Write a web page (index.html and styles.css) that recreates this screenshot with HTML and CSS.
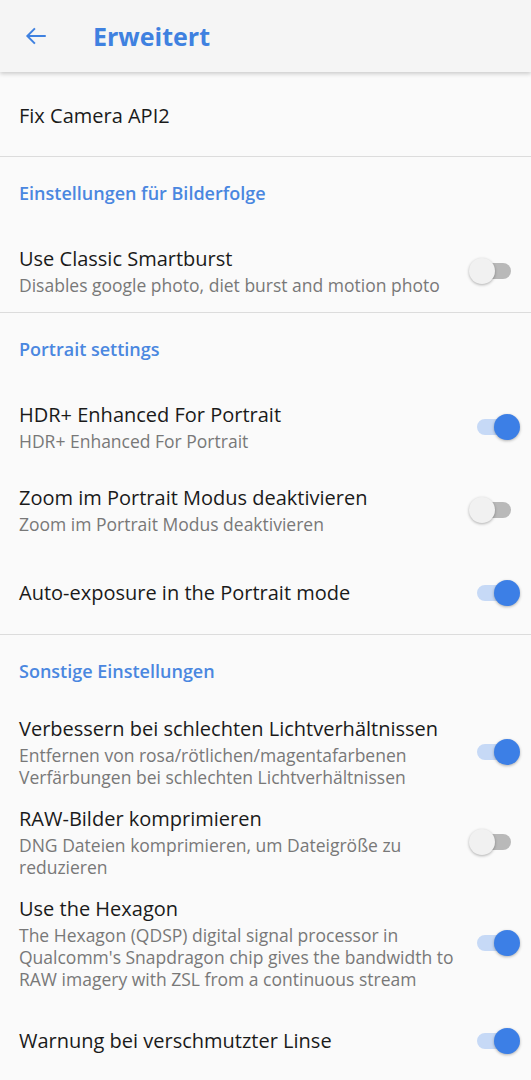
FILE: index.html
```html
<!DOCTYPE html>
<html lang="de">
<head>
    <meta charset="UTF-8">
    <meta name="viewport" content="width=device-width, initial-scale=1.0">
    <title>Erweitert</title>
    <link rel="stylesheet" href="styles.css">
</head>
<body>
    <header class="toolbar">
        <svg class="back" width="26" height="26" viewBox="0 0 24 24">
            <path d="M21 12H4M11 5l-7 7 7 7" fill="none" stroke="#3f81e0" stroke-width="1.8"/>
        </svg>
        <h1>Erweitert</h1>
    </header>

    <div class="pref first">
        <div class="text">
            <div class="title">Fix Camera API2</div>
        </div>
    </div>

    <div class="divider"></div>
    <div class="category">Einstellungen für Bilderfolge</div>
    <div class="pref">
        <div class="text">
            <div class="title">Use Classic Smartburst</div>
            <div class="summary">Disables google photo, diet burst and motion photo</div>
        </div>
        <span class="switch"></span>
    </div>

    <div class="divider"></div>
    <div class="category">Portrait settings</div>
    <div class="pref">
        <div class="text">
            <div class="title">HDR+ Enhanced For Portrait</div>
            <div class="summary">HDR+ Enhanced For Portrait</div>
        </div>
        <span class="switch on"></span>
    </div>
    <div class="pref">
        <div class="text">
            <div class="title">Zoom im Portrait Modus deaktivieren</div>
            <div class="summary">Zoom im Portrait Modus deaktivieren</div>
        </div>
        <span class="switch"></span>
    </div>
    <div class="pref">
        <div class="text">
            <div class="title">Auto-exposure in the Portrait mode</div>
        </div>
        <span class="switch on"></span>
    </div>

    <div class="divider"></div>
    <div class="category">Sonstige Einstellungen</div>
    <div class="pref">
        <div class="text">
            <div class="title">Verbessern bei schlechten Lichtverhältnissen</div>
            <div class="summary">Entfernen von rosa/rötlichen/magentafarbenen Verfärbungen bei schlechten Lichtverhältnissen</div>
        </div>
        <span class="switch on"></span>
    </div>
    <div class="pref">
        <div class="text">
            <div class="title">RAW-Bilder komprimieren</div>
            <div class="summary">DNG Dateien komprimieren, um Dateigröße zu reduzieren</div>
        </div>
        <span class="switch"></span>
    </div>
    <div class="pref">
        <div class="text">
            <div class="title">Use the Hexagon</div>
            <div class="summary">The Hexagon (QDSP) digital signal processor in Qualcomm's Snapdragon chip gives the bandwidth to RAW imagery with ZSL from a continuous stream</div>
        </div>
        <span class="switch on"></span>
    </div>
    <div class="pref">
        <div class="text">
            <div class="title">Warnung bei verschmutzter Linse</div>
        </div>
        <span class="switch on"></span>
    </div>
</body>
</html>
```

FILE: styles.css
```css
body {
    margin: 0;
    background-color: #fafafa;
    font-family: "Open Sans", Roboto, sans-serif;
    color: #1a1a1a;
    overflow: hidden;
}

.toolbar {
    height: 72px;
    display: flex;
    align-items: center;
    background-color: #f5f5f5;
    box-shadow: 0 2px 4px rgba(0, 0, 0, 0.18);
    position: relative;
}

.toolbar .back {
    margin-left: 23px;
}

.toolbar h1 {
    margin: 0 0 0 44px;
    font-size: 25px;
    font-weight: bold;
    color: #3f81e0;
}

.pref {
    min-height: 83px;
    box-sizing: border-box;
    padding: 9px 20px 9px 19px;
    display: flex;
    align-items: center;
}

.pref.first {
    min-height: 84px;
    padding-top: 13px;
}

.pref .text {
    flex: 1;
    padding-right: 14px;
}

.title {
    font-size: 20px;
    line-height: 26px;
}

.summary {
    margin-top: 2px;
    font-size: 17.5px;
    line-height: 22px;
    color: #787878;
}

.divider {
    height: 1px;
    background-color: #dcdcdc;
}

.category {
    height: 72px;
    display: flex;
    align-items: center;
    padding-left: 19px;
    font-size: 18px;
    font-weight: 600;
    color: #4a87e0;
}

.switch {
    position: relative;
    flex: none;
    width: 34px;
    height: 16px;
    border-radius: 8px;
    background-color: #b9b9b9;
}

.switch::after {
    content: "";
    position: absolute;
    top: -5px;
    left: -8px;
    width: 26px;
    height: 26px;
    border-radius: 50%;
    background-color: #f1f1f1;
    box-shadow: 0 1px 3px rgba(0, 0, 0, 0.3);
}

.switch.on {
    background-color: #c6d9f6;
}

.switch.on::after {
    left: 17px;
    background-color: #3c7fe6;
}
```
